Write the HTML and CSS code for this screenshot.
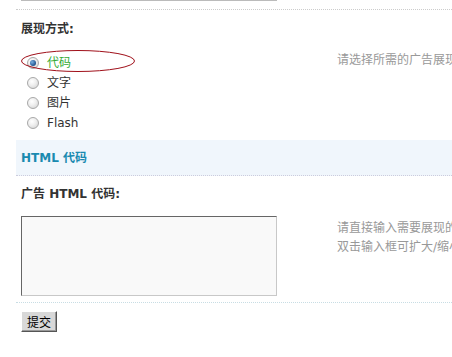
FILE: index.html
```html
<!DOCTYPE html>
<html>
<head>
<meta charset="utf-8">
<link rel="stylesheet" href="styles.css">
</head>
<body>
<div class="page">
  <div class="prev-row"><div class="prev-input"></div></div>
  <div class="label-row">展现方式:</div>
  <div class="field-row">
    <ul class="radios">
      <li class="checked"><span class="radio on"></span><span class="txt green">代码</span></li>
      <li><span class="radio"></span><span class="txt">文字</span></li>
      <li><span class="radio"></span><span class="txt">图片</span></li>
      <li><span class="radio"></span><span class="txt">Flash</span></li>
      <svg class="mark" width="116" height="24" viewBox="0 0 116 24"><ellipse cx="58" cy="12" rx="56.5" ry="10.5" fill="none" stroke="#a0101a" stroke-width="1"/></svg>
    </ul>
    <div class="tip tip-top">请选择所需的广告展现方式</div>
  </div>
  <div class="section">HTML 代码</div>
  <div class="label-row label-2">广告 HTML 代码:</div>
  <div class="field-row code-row">
    <textarea class="code"></textarea>
    <div class="tip tip-code">请直接输入需要展现的广告代码<br>双击输入框可扩大/缩小</div>
  </div>
  <div class="submit-row"><button class="btn">提交</button></div>
</div>
</body>
</html>
```
FILE: styles.css
```css
* { box-sizing: border-box; }
html, body { margin: 0; padding: 0; background: #fff; }
body {
  font-family: "DejaVu Sans", "Noto Sans CJK SC", sans-serif;
  font-size: 12px;
  color: #333;
  overflow: hidden;
}
.page { padding-left: 16px; width: 452px; }
.prev-row {
  height: 10px;
  border-bottom: 1px dotted #ccc;
}
.prev-input {
  margin-left: 5px;
  width: 256px;
  height: 1px;
  background: #bbb;
}
.label-row {
  padding: 9px 5px 0;
  line-height: 20px;
  font-weight: bold;
  color: #333;
}
.field-row {
  display: grid;
  grid-template-columns: 316px 1fr;
  padding: 0 0 0 5px;
}
.radios {
  position: relative;
  list-style: none;
  margin: 0;
  padding: 14px 0 7px 6px;
}
.radios li {
  display: flex;
  align-items: center;
  height: 20px;
}
.radio {
  width: 12px;
  height: 12px;
  border-radius: 50%;
  border: 1px solid #a8a8a8;
  background: radial-gradient(circle at 40% 35%, #fff 0%, #f0f0f0 40%, #d0d0d0 100%);
  margin-right: 8px;
  flex: none;
  position: relative;
}
.radio.on::after {
  content: "";
  position: absolute;
  left: 2px; top: 2px;
  width: 6px; height: 6px;
  border-radius: 50%;
  background: radial-gradient(circle at 35% 35%, #7ab0e0 0%, #2a5f9a 60%, #123a6a 100%);
}
.txt { line-height: 20px; }
.green { color: #33aa33; }
.mark {
  position: absolute;
  left: -1px;
  top: 10px;
}
.tip {
  color: #999;
  line-height: 19px;
  white-space: nowrap;
  overflow: hidden;
  padding-left: 0;
}
.tip-top { padding-top: 12px; }
.section {
  height: 36px;
  line-height: 36px;
  padding-left: 5px;
  background: #f0f6fc;
  border-bottom: 1px dotted #ccd;
  color: #1a8ab0;
  font-weight: bold;
}
.label-2 { padding-top: 8px; }
.code-row {
  padding-top: 12px;
  padding-bottom: 6px;
  border-bottom: 1px dotted #c8dde4;
}
.code {
  display: block;
  width: 256px;
  height: 80px;
  margin: 0;
  border-style: solid;
  border-width: 1px;
  border-color: #666 #c8c8c8 #c8c8c8 #666;
  background: #f9f9f9;
  resize: none;
}
.tip-code { padding-top: 3px; }
.submit-row { padding: 8px 5px; }
.btn {
  font-family: "Noto Sans CJK SC", sans-serif;
  font-size: 12px;
  line-height: 17px;
  height: 21px;
  width: 36px;
  padding: 0;
  background: #d8d8d8;
  color: #000;
  border: 1px solid;
  border-color: #fff #555 #555 #fff;
  box-shadow: inset -1px -1px 0 #999;
}
```
